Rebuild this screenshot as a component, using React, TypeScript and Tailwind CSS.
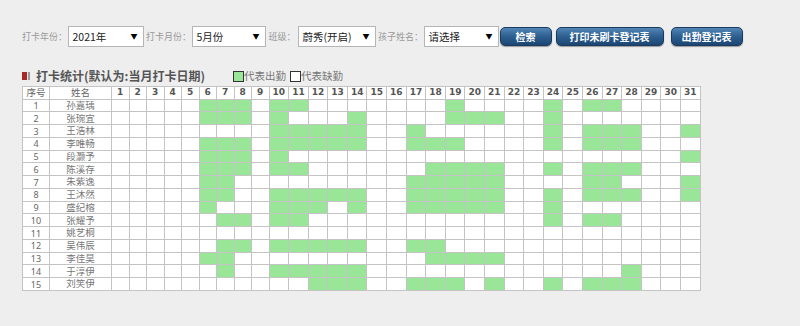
const days = Array.from({ length: 31 }, (_, i) => i + 1)

const students: [string, number[]][] = [
  ["孙嘉瑀", [6, 7, 8, 10, 11, 19, 24, 26, 27]],
  ["张琬宜", [6, 7, 8, 10, 14, 19, 20, 21, 24]],
  ["王浩林", [10, 11, 12, 13, 14, 17, 24, 26, 27, 28, 31]],
  ["李唯畅", [6, 7, 8, 10, 11, 12, 13, 14, 17, 18, 19, 24, 26, 27, 28]],
  ["段灏予", [6, 7, 8, 10, 31]],
  ["陈溪存", [6, 7, 8, 10, 11, 18, 19, 20, 21, 24, 26, 27, 28]],
  ["朱紫逸", [6, 7, 17, 18, 19, 20, 21, 26, 27, 31]],
  ["王沐然", [6, 7, 10, 11, 12, 13, 14, 17, 18, 19, 20, 21, 24, 26, 27, 28, 31]],
  ["盛纪榕", [6, 10, 11, 12, 14, 17, 18, 19, 20, 21, 24]],
  ["张耀予", [7, 8, 10, 11, 24, 26, 27]],
  ["姚艺桐", []],
  ["吴伟辰", [7, 8, 10, 11, 12, 13, 14, 17, 18]],
  ["李佳昊", [6, 7, 18, 19, 20, 21]],
  ["于淳伊", [7, 10, 11, 12, 13, 14, 28]],
  ["刘笑伊", [12, 13, 14, 17, 18, 19, 21, 24, 26, 27, 28]],
]

function FakeSelect({ value, width }: { value: string; width: string }) {
  return (
    <div className={`${width} flex h-[21px] items-center justify-between border border-[#b5b5b5] bg-white pl-[4px] pr-[5px] text-[10.5px] text-[#222]`}>
      <span>{value}</span>
      <span className="text-[7px] text-black">▼</span>
    </div>
  )
}

function Label({ text, className = "" }: { text: string; className?: string }) {
  return <span className={`text-[9px] text-[#999] ${className}`}>{text}</span>
}

function BlueButton({ text, width, className = "" }: { text: string; width: string; className?: string }) {
  return (
    <button
      className={`${width} h-[19px] rounded-[5px] border border-[#1b3b5e] bg-gradient-to-b from-[#5186b6] via-[#2d5f90] to-[#1c4673] text-[10px] font-semibold text-white shadow-[0_1px_1px_rgba(0,0,0,0.35)] ${className}`}
    >
      {text}
    </button>
  )
}

export default function App() {
  return (
    <div className="h-[326px] w-[800px] bg-[#eeeeee] font-['Noto_Sans_CJK_SC','Noto_Sans',sans-serif]">
      <div className="flex items-center pl-[22px] pt-[26px]">
        <Label text="打卡年份：" className="mr-[0.5px]" />
        <FakeSelect value="2021年" width="w-[76px]" />
        <Label text="打卡月份：" className="ml-[2.5px] mr-[0.5px]" />
        <FakeSelect value="5月份" width="w-[74px]" />
        <Label text="班级：" className="ml-[3px] mr-[2px]" />
        <FakeSelect value="蔚秀(开启)" width="w-[78px]" />
        <Label text="孩子姓名：" className="ml-[2.5px] mr-[0.5px]" />
        <FakeSelect value="请选择" width="w-[75px]" />
        <BlueButton text="检索" width="w-[52px]" className="ml-[1px]" />
        <BlueButton text="打印未刷卡登记表" width="w-[108px]" className="ml-[4px]" />
        <BlueButton text="出勤登记表" width="w-[72px]" className="ml-[7px]" />
      </div>

      <div className="mt-[21px] flex h-[16px] items-center pl-[22px]">
        <span className="h-[8px] w-[4.5px] bg-[#a8282a]" />
        <span className="ml-[1.5px] h-[8px] w-[1.5px] bg-[#9a9a9a]" />
        <span className="ml-[6.5px] text-[12px] font-bold text-[#555]">打卡统计(默认为:当月打卡日期)</span>
        <span className="ml-[28px] h-[11px] w-[11px] border border-[#333] bg-[#99e699]" />
        <span className="text-[10.5px] text-[#777]">代表出勤</span>
        <span className="ml-[4px] h-[11px] w-[11px] border border-[#333] bg-white" />
        <span className="text-[10.5px] text-[#777]">代表缺勤</span>
      </div>

      <div className="mt-[2px] pl-[22px]">
        <table className="w-[677px] table-fixed border-collapse border border-[#c4c4c4] bg-white text-[#666]">
          <colgroup>
            <col className="w-[27px]" />
            <col className="w-[62px]" />
            {days.map((d) => (
              <col key={d} className={d < 10 ? "w-[17.5px]" : "w-[19.6px]"} />
            ))}
          </colgroup>
          <thead>
            <tr className="h-[12.7px]">
              <th className="border border-[#c4c4c4] p-0 text-[9.5px] font-normal leading-none">序号</th>
              <th className="border border-[#c4c4c4] p-0 text-[9.5px] font-normal leading-none">姓名</th>
              {days.map((d) => (
                <th
                  key={d}
                  className="border border-[#c4c4c4] p-0 font-['DejaVu_Sans',sans-serif] text-[9px] font-bold leading-none text-[#555]"
                >
                  {d}
                </th>
              ))}
            </tr>
          </thead>
          <tbody>
            {students.map(([name, present], i) => (
              <tr key={name} className="h-[12.75px]">
                <td className="border border-[#c4c4c4] p-0 text-center font-['Noto_Sans',sans-serif] text-[9px] leading-none">
                  {i + 1}
                </td>
                <td className="border border-[#c4c4c4] p-0 text-center text-[9.5px] leading-none text-[#777]">{name}</td>
                {days.map((d) => (
                  <td
                    key={d}
                    className={`border border-[#c4c4c4] p-0 ${present.includes(d) ? "bg-[#99e699]" : "bg-white"}`}
                  />
                ))}
              </tr>
            ))}
          </tbody>
        </table>
      </div>
    </div>
  )
}
